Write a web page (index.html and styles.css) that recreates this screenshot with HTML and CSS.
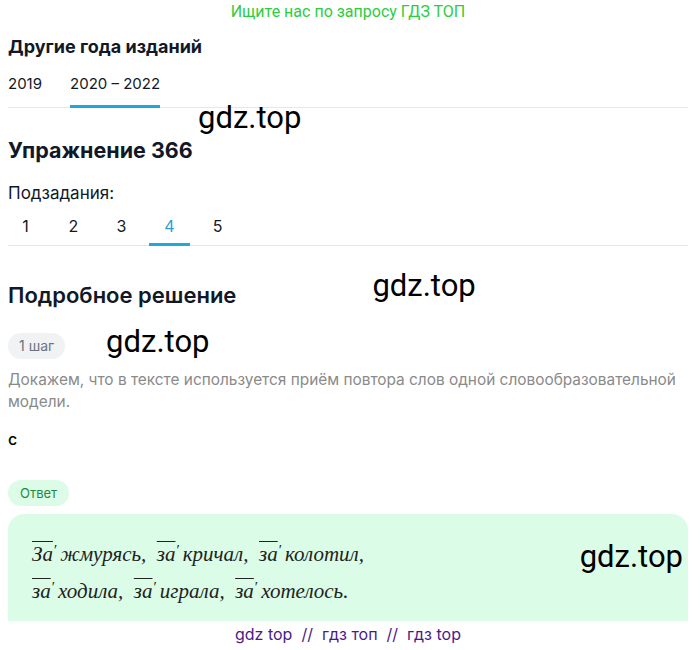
FILE: index.html
```html
<!DOCTYPE html>
<html lang="ru">
<head>
<meta charset="utf-8">
<link rel="stylesheet" href="styles.css">
</head>
<body>
<div class="page">
  <div class="promo">Ищите нас по запросу ГДЗ ТОП</div>
  <h2 class="h-years">Другие года изданий</h2>
  <div class="tabs years">
    <span class="tab">2019</span>
    <span class="tab active">2020 – 2022</span>
  </div>
  <div class="wm-row wm1"><span class="wm">gdz.top</span></div>
  <h1 class="h-ex">Упражнение 366</h1>
  <div class="sub-label">Подзадания:</div>
  <div class="tabs subs">
    <span class="tab">1</span>
    <span class="tab">2</span>
    <span class="tab">3</span>
    <span class="tab active">4</span>
    <span class="tab">5</span>
  </div>
  <div class="sol-row">
    <h2 class="h-sol">Подробное решение</h2>
    <span class="wm wm2">gdz.top</span>
  </div>
  <div class="step-row">
    <span class="pill step">1 шаг</span>
    <span class="wm wm3">gdz.top</span>
  </div>
  <p class="desc">Докажем, что в тексте используется приём повтора слов одной словообразовательной модели.</p>
  <p class="c">с</p>
  <div class="answer-row"><span class="pill answer">Ответ</span></div>
  <div class="answer-box">
    <div class="math">
      <div class="line"><span class="ov">За</span><span class="pr">′</span>жмурясь, &nbsp;<span class="ov">за</span><span class="pr">′</span>кричал, &nbsp;<span class="ov">за</span><span class="pr">′</span>колотил,</div>
      <div class="line"><span class="ov">за</span><span class="pr">′</span>ходила, &nbsp;<span class="ov">за</span><span class="pr">′</span>играла, &nbsp;<span class="ov">за</span><span class="pr">′</span>хотелось.</div>
    </div>
    <span class="wm wm4">gdz.top</span>
  </div>
  <div class="footer">gdz top &nbsp;//&nbsp; гдз топ &nbsp;//&nbsp; гдз top</div>
</div>
</body>
</html>
```
FILE: styles.css
```css
html, body { margin: 0; padding: 0; background: #fff; }
body { font-family: Inter, Roboto, "Noto Sans", sans-serif; color: #111827; }
.page { width: 680px; margin: 0 8px; }
.promo { text-align: center; color: #2ecc40; font-family: Roboto, sans-serif; font-size: 16px; line-height: 24px; height: 24px; }
h1, h2 { margin: 0; font-weight: 700; }
.h-years { font-size: 18px; line-height: 24px; margin-top: 11px; }
.tabs { display: flex; border-bottom: 1px solid #e5e7eb; }
.tab { font-size: 16px; line-height: 20px; margin-bottom: -1px; border-bottom: 3px solid transparent; }
.years { gap: 28px; }
.years .tab { font-size: 15px; padding: 15px 0 11px; }
.tab.active { border-bottom-color: #1fa8d8; }
.subs { margin-top: 7px; }
.subs .tab { width: 41px; text-align: center; margin-right: 7px; padding: 6px 0 7px; }
.subs .tab:first-child { margin-left: -3px; }
.subs .tab.active { color: #2a9fd6; }
.wm { font-family: Roboto, Arial, sans-serif; font-size: 31px; line-height: 32px; color: #000; font-weight: 400; }
.wm-row.wm1 { padding-left: 190px; height: 30px; margin-top: -6px; }
.h-ex { font-size: 21.5px; line-height: 28px; margin-top: 4px; }
.sub-label { font-size: 17px; line-height: 20px; margin-top: 19px; }
.sol-row { display: flex; align-items: flex-start; margin-top: 24px; }
.h-sol { font-size: 22px; font-weight: 600; line-height: 28px; margin-top: 11px; }
.wm2 { margin-left: 136px; }
.step-row { display: flex; align-items: flex-start; margin-top: 24px; }
.pill { display: inline-block; border-radius: 14px; font-size: 13px; line-height: 26px; height: 26px; }
.step { background: #f1f2f4; color: #6b7280; font-size: 14px; padding: 0 11px; }
.wm3 { margin-left: 41px; margin-top: -7px; }
.desc { margin: 10px 0 0; color: #8a8a8a; font-size: 15.4px; line-height: 22px; }
.c { margin: 15px 0 0; font-size: 16px; line-height: 22px; color: #000; font-weight: 500; }
.answer-row { display: flex; margin-top: 30px; }
.answer { background: #dcfce7; color: #1f8a3a; padding: 0 12px; }
.answer-box { margin-top: 8px; background: #dbfce7; border-radius: 16px 16px 0 0; height: 107px; display: flex; align-items: flex-start; justify-content: space-between; }
.math { font-family: "Liberation Serif", "DejaVu Serif", serif; font-style: italic; font-size: 21px; color: #222; padding: 22px 0 0 24px; }
.line { line-height: 37px; height: 37px; }
.ov { text-decoration: overline; text-decoration-thickness: 1px; }
.pr { font-style: normal; font-size: 15px; line-height: 0; vertical-align: 6px; margin: 0 3px 0 1px; }
.wm4 { margin-top: 27px; margin-right: 5px; }
.footer { text-align: center; color: #4a1a8a; font-size: 16px; line-height: 26px; }
```
